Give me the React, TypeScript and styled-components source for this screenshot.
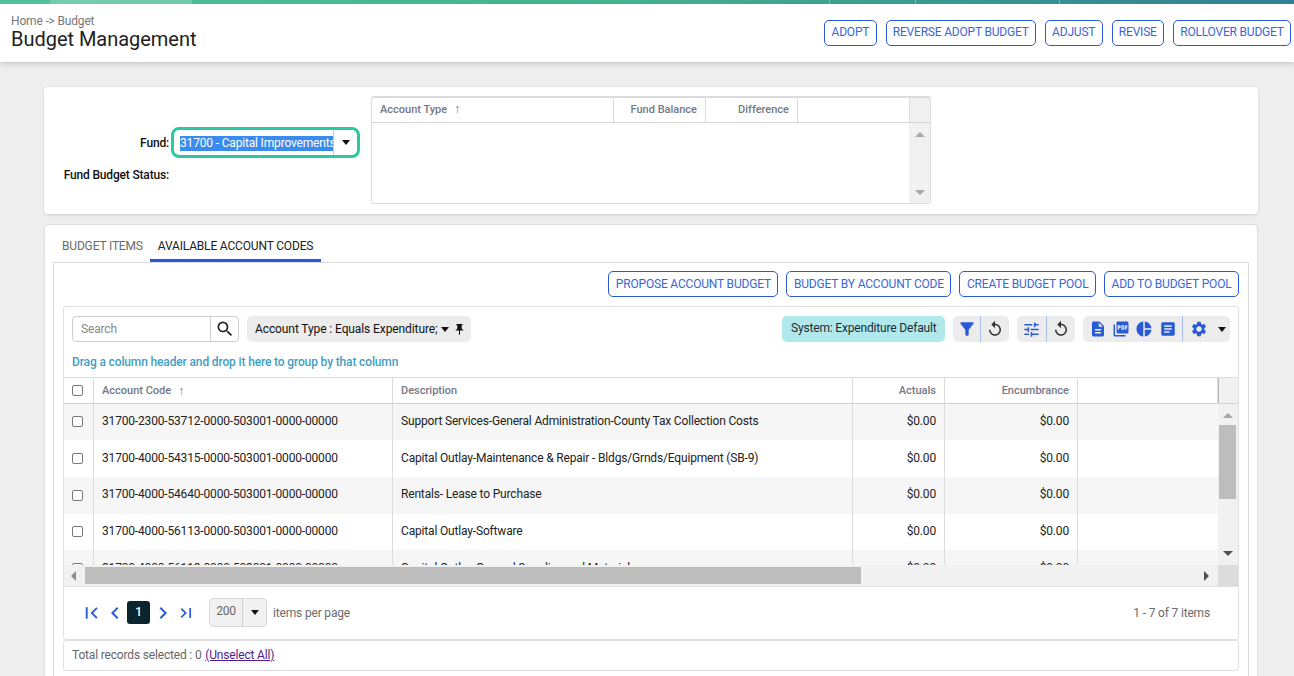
import React from "react";
import styled, { createGlobalStyle } from "styled-components";
import {
  MdArticle,
  MdChevronLeft,
  MdChevronRight,
  MdDescription,
  MdFilterAlt,
  MdFirstPage,
  MdLastPage,
  MdPictureAsPdf,
  MdPieChart,
  MdPushPin,
  MdReplay,
  MdSearch,
  MdSettings,
  MdTune,
} from "react-icons/md";

const blue = "#2a5bd7";

const GlobalStyle = createGlobalStyle`
  html, body {
    margin: 0;
    padding: 0;
    height: 100%;
    overflow: hidden;
    background: #eeeeee;
    font-family: Roboto, "Liberation Sans", sans-serif;
    font-size: 12px;
    letter-spacing: -0.17px;
    color: #212529;
  }
  * { box-sizing: border-box; }
`;

const Page = styled.div`
  position: relative;
  width: 1294px;
  height: 676px;
  overflow: hidden;
`;

const TopStripe = styled.div`
  position: relative;
  display: flex;
  height: 4px;
  background: linear-gradient(90deg, #50c29a 0%, #45b08f 50%, #3c9c90 70%, #317f93 100%);
`;

const StripeLight = styled.div`
  width: 142px;
  margin-left: 50px;
  background: rgba(255, 255, 255, 0.2);
`;

const StripeMark = styled.span<{ $x: number }>`
  position: absolute;
  left: ${(p) => p.$x}px;
  top: 0;
  width: 1px;
  height: 4px;
  background: rgba(255, 255, 255, 0.3);
`;

const Header = styled.header`
  display: flex;
  justify-content: space-between;
  height: 58px;
  background: #fff;
  box-shadow: 0 2px 5px rgba(0, 0, 0, 0.16);
  padding: 10px 3px 0 11px;
`;

const Crumb = styled.div`
  font-size: 12px;
  line-height: 14px;
  color: #777;
`;

const Title = styled.h1`
  margin: 0;
  font-size: 20px;
  line-height: 22px;
  font-weight: 400;
  letter-spacing: -0.03px;
  color: #212121;
`;

const HeaderActions = styled.div`
  display: flex;
  gap: 9px;
  padding-top: 6px;
`;

const OutlineButton = styled.button`
  height: 26px;
  padding: 0 6.5px;
  border: 1px solid ${blue};
  border-radius: 5px;
  background: #fff;
  color: #3a66d8;
  font: 400 12px Roboto, sans-serif;
  letter-spacing: -0.18px;
  white-space: nowrap;
`;

const HeaderButton = styled(OutlineButton)`
  padding: 0 6.25px 2px;
  letter-spacing: -0.2px;
`;

const FundCard = styled.section`
  position: absolute;
  left: 44px;
  top: 87px;
  width: 1214px;
  height: 127px;
  background: #fff;
  border-radius: 4px;
  box-shadow: 0 1px 3px rgba(0, 0, 0, 0.14);
`;

const FieldLabel = styled.label<{ $top: number }>`
  position: absolute;
  top: ${(p) => p.$top}px;
  right: 1089px;
  font-size: 12px;
  line-height: 14px;
  font-weight: 500;
  color: #111;
  white-space: nowrap;
`;

const FundSelect = styled.div`
  position: absolute;
  left: 127px;
  top: 40px;
  width: 189px;
  height: 31px;
  display: flex;
  align-items: center;
  border: 3px solid #2cc9a0;
  border-radius: 8px;
  background: #fff;
`;

const FundValue = styled.div`
  width: 160px;
  height: 100%;
  padding-left: 6px;
  border-right: 1px solid #ccc;
  overflow: hidden;
  white-space: nowrap;
  line-height: 27px;
  color: #fff;

  span {
    display: inline-block;
    width: 154px;
    height: 15px;
    line-height: 15px;
    background: #3a8bf0;
    overflow: hidden;
    vertical-align: middle;
  }
`;

const Caret = styled.span`
  display: inline-block;
  width: 0;
  height: 0;
  border-left: 4px solid transparent;
  border-right: 4px solid transparent;
  border-top: 5px solid #111;
`;

const CaretCell = styled.div`
  flex: 1;
  display: flex;
  align-items: center;
  justify-content: center;
`;

const SummaryGrid = styled.div`
  position: absolute;
  left: 327px;
  top: 9px;
  width: 560px;
  height: 108px;
  border: 1px solid #dcdcdc;
  border-top-width: 2px;
  border-radius: 3px;
  overflow: hidden;
`;

const SummaryHead = styled.div`
  display: grid;
  grid-template-columns: 242px 92px 92px 112px 1fr;
  height: 25px;
  border-bottom: 1px solid #d6d6d6;
`;

const HeadCell = styled.div<{ $right?: boolean; $raise?: boolean }>`
  display: flex;
  align-items: center;
  justify-content: ${(p) => (p.$right ? "flex-end" : "flex-start")};
  gap: 7px;
  padding: 0 8px ${(p) => (p.$raise ? 2 : 0)}px;
  font-size: 11px;
  font-weight: 500;
  letter-spacing: 0;
  color: #737985;
  border-right: 1px solid #dcdcdc;
  white-space: nowrap;
`;

const SortArrow = styled.span`
  font-size: 12px;
  color: #6b7280;
`;

const ScrollCorner = styled.div`
  background: #f1f1f1;
`;

const GridCorner = styled(ScrollCorner)`
  border-left: 1px solid #b5b5b5;
`;

const SummaryScroll = styled.div`
  position: absolute;
  right: 0;
  top: 25px;
  bottom: 0;
  width: 21px;
  background: #f1f1f1;
  display: flex;
  flex-direction: column;
  justify-content: space-between;
  align-items: center;
  padding: 9px 0 8px;
`;

const ArrowUp = styled.span`
  width: 0;
  height: 0;
  border-left: 5px solid transparent;
  border-right: 5px solid transparent;
  border-bottom: 5px solid #a8a8a8;
`;

const ArrowDown = styled.span<{ $dark?: boolean }>`
  width: 0;
  height: 0;
  border-left: 5px solid transparent;
  border-right: 5px solid transparent;
  border-top: 5px solid ${(p) => (p.$dark ? "#505050" : "#a8a8a8")};
`;

const TabsCard = styled.section`
  position: absolute;
  left: 44px;
  top: 224px;
  width: 1214px;
  height: 470px;
  background: #fff;
  border: 1px solid #dcdcdc;
  border-radius: 4px;
`;

const TabRow = styled.div`
  position: absolute;
  left: 9px;
  top: 7px;
  display: flex;
`;

const Tab = styled.div<{ $active?: boolean }>`
  height: 30px;
  padding: 0 8px;
  margin-left: ${(p) => (p.$active ? -1 : 0)}px;
  line-height: 28px;
  font-size: 12px;
  color: ${(p) => (p.$active ? "#212121" : "#6b6b6b")};
  border-bottom: 3px solid ${(p) => (p.$active ? blue : "transparent")};
  white-space: nowrap;
`;

const TabPanel = styled.div`
  position: absolute;
  left: 8px;
  top: 37px;
  width: 1196px;
  height: 430px;
  border: 1px solid #dcdcdc;
`;

const PanelActions = styled.div`
  position: absolute;
  right: 9px;
  top: 8px;
  display: flex;
  gap: 8px;
`;

const GridBox = styled.div`
  position: absolute;
  left: 9px;
  top: 43px;
  width: 1176px;
  height: 334px;
  border: 1px solid #dfdfdf;
  border-radius: 3px;
  overflow: hidden;
`;

const GridToolbar = styled.div`
  position: absolute;
  left: 8px;
  right: 8px;
  top: 9px;
  height: 26px;
  display: flex;
  align-items: flex-start;
`;

const SearchBox = styled.div`
  display: flex;
  width: 167px;
  height: 26px;
  border: 1px solid #cfcfcf;
  border-radius: 4px;
`;

const SearchInput = styled.div`
  flex: 1;
  padding-left: 8px;
  line-height: 24px;
  color: #888;
  border-right: 1px solid #cfcfcf;
`;

const SearchButton = styled.div`
  width: 27px;
  display: flex;
  align-items: center;
  justify-content: center;
  color: #222;
  font-size: 20px;
`;

const FilterChip = styled.div`
  margin-left: 8px;
  height: 26px;
  padding: 0 5px 0 8px;
  display: flex;
  align-items: center;
  gap: 4px;
  background: #ececec;
  border-radius: 5px;
  color: #111;
  letter-spacing: -0.1px;
  white-space: nowrap;
  svg { font-size: 13px; }
`;

const ViewChip = styled.div`
  margin-left: auto;
  height: 26px;
  padding: 0 8.5px;
  line-height: 24px;
  background: #b0e8ec;
  border-radius: 5px;
  color: #1c2b33;
  white-space: nowrap;
`;

const IconGroup = styled.div<{ $inset?: number }>`
  margin-left: 8px;
  height: 26px;
  padding-left: ${(p) => p.$inset ?? 0}px;
  display: flex;
  align-items: center;
  background: #ececec;
  border-radius: 5px;
`;

const IconSlot = styled.div<{ $w: number; $size?: number; $dark?: boolean; $divider?: boolean; $pad?: number }>`
  width: ${(p) => p.$w}px;
  height: 26px;
  padding-right: ${(p) => p.$pad ?? 0}px;
  display: flex;
  align-items: center;
  justify-content: center;
  font-size: ${(p) => p.$size ?? 18}px;
  color: ${(p) => (p.$dark ? "#333" : blue)};
  border-right: ${(p) => (p.$divider ? "1px solid #a9bdec" : "none")};
`;

const GroupHint = styled.div`
  position: absolute;
  left: 8px;
  top: 48px;
  font-size: 12px;
  line-height: 14px;
  font-weight: 500;
  letter-spacing: -0.14px;
  color: #3f9fc4;
  white-space: nowrap;
`;

const GridHead = styled.div`
  position: absolute;
  left: 0;
  right: 0;
  top: 70px;
  height: 27px;
  display: grid;
  grid-template-columns: 30px 299px 460px 92px 133px 140px 1fr;
  border-top: 1px solid #dcdcdc;
  border-bottom: 1px solid #d0d0d0;
`;

const CheckCell = styled.div`
  display: flex;
  align-items: center;
  justify-content: center;
  padding-right: 2px;
  border-right: 1px solid #dcdcdc;
`;

const CheckBox = styled.span`
  width: 11px;
  height: 11px;
  border: 1px solid #777;
  border-radius: 2px;
  background: #fff;
`;

const GridBody = styled.div`
  position: absolute;
  left: 0;
  right: 20px;
  top: 96.5px;
  height: 161.5px;
  overflow: hidden;
`;

const Row = styled.div<{ $alt: boolean }>`
  display: grid;
  grid-template-columns: 30px 299px 460px 92px 133px 1fr;
  height: 36.7px;
  background: ${(p) => (p.$alt ? "#f6f6f6" : "#fff")};
`;

const Cell = styled.div<{ $right?: boolean }>`
  display: flex;
  align-items: center;
  justify-content: ${(p) => (p.$right ? "flex-end" : "flex-start")};
  padding: 0 8px 2px;
  color: #222;
  border-right: 1px solid #dcdcdc;
  white-space: nowrap;
  overflow: hidden;
`;

const VScroll = styled.div`
  position: absolute;
  right: 0;
  top: 97px;
  width: 20px;
  height: 161px;
  background: #f1f1f1;
`;

const VThumb = styled.div`
  position: absolute;
  left: 1px;
  top: 21px;
  width: 17px;
  height: 74px;
  background: #bdbdbd;
`;

const VArrow = styled.div<{ $top: number }>`
  position: absolute;
  left: 5px;
  top: ${(p) => p.$top}px;
  display: flex;
`;

const HScroll = styled.div`
  position: absolute;
  left: 0;
  right: 0;
  top: 258px;
  height: 22px;
  background: #f1f1f1;
  border-bottom: 1px solid #e0e0e0;
`;

const HThumb = styled.div`
  position: absolute;
  left: 21px;
  top: 2px;
  width: 776px;
  height: 17px;
  background: #bdbdbd;
`;

const ArrowLeft = styled.span`
  position: absolute;
  left: 7px;
  top: 6px;
  width: 0;
  height: 0;
  border-top: 5px solid transparent;
  border-bottom: 5px solid transparent;
  border-right: 5px solid #8a8a8a;
`;

const ArrowRight = styled.span`
  position: absolute;
  right: 29px;
  top: 6px;
  width: 0;
  height: 0;
  border-top: 5px solid transparent;
  border-bottom: 5px solid transparent;
  border-left: 5px solid #505050;
`;

const HCorner = styled.div`
  position: absolute;
  right: 0;
  top: 0;
  width: 20px;
  height: 21px;
  background: #dcdcdc;
`;

const Pager = styled.div`
  position: absolute;
  left: 0;
  right: 0;
  top: 280px;
  height: 51px;
  display: flex;
  align-items: center;
  padding: 0 28px 0 16px;
  color: #6b6b6b;
`;

const PagerIcon = styled.span<{ $w: number }>`
  width: ${(p) => p.$w}px;
  display: flex;
  justify-content: center;
  color: ${blue};
  font-size: 24px;
`;

const PageNumber = styled.span`
  width: 23px;
  height: 23px;
  border-radius: 3px;
  background: #0a2530;
  color: #fff;
  font-weight: 500;
  text-align: center;
  line-height: 23px;
`;

const PageSize = styled.div`
  margin-left: 13px;
  width: 58px;
  height: 29px;
  display: flex;
  border: 1px solid #d8d8d8;
  border-radius: 4px;
  background: #f1f1f1;
`;

const PageSizeValue = styled.div`
  width: 33px;
  line-height: 25px;
  text-align: center;
  color: #666;
  border-right: 1px solid #d0d0d0;
`;

const PagerLabel = styled.span`
  margin-left: 6px;
`;

const PagerCount = styled.span`
  margin-left: auto;
`;

const SelectedBar = styled.div`
  position: absolute;
  left: 9px;
  top: 377px;
  width: 1176px;
  height: 31px;
  padding-left: 8px;
  line-height: 29px;
  border: 1px solid #dfdfdf;
  border-radius: 3px;
  color: #666;
`;

const UnselectLink = styled.a`
  margin-left: 1px;
  color: #551a8b;
  text-decoration: underline;
`;

const rows = [
  ["31700-2300-53712-0000-503001-0000-00000", "Support Services-General Administration-County Tax Collection Costs"],
  ["31700-4000-54315-0000-503001-0000-00000", "Capital Outlay-Maintenance & Repair - Bldgs/Grnds/Equipment (SB-9)"],
  ["31700-4000-54640-0000-503001-0000-00000", "Rentals- Lease to Purchase"],
  ["31700-4000-56113-0000-503001-0000-00000", "Capital Outlay-Software"],
  ["31700-4000-56118-0000-503001-0000-00000", "Capital Outlay-General Supplies and Materials"],
];

export default function App() {
  return (
    <Page>
      <GlobalStyle />
      <TopStripe>
        <StripeLight />
        <StripeMark $x={829} />
        <StripeMark $x={915} />
        <StripeMark $x={1059} />
      </TopStripe>
      <Header>
        <div>
          <Crumb>Home -&gt; Budget</Crumb>
          <Title>Budget Management</Title>
        </div>
        <HeaderActions>
          <HeaderButton>ADOPT</HeaderButton>
          <HeaderButton>REVERSE ADOPT BUDGET</HeaderButton>
          <HeaderButton>ADJUST</HeaderButton>
          <HeaderButton>REVISE</HeaderButton>
          <HeaderButton>ROLLOVER BUDGET</HeaderButton>
        </HeaderActions>
      </Header>

      <FundCard>
        <FieldLabel $top={49}>Fund:</FieldLabel>
        <FundSelect>
          <FundValue>
            <span>31700 - Capital Improvements</span>
          </FundValue>
          <CaretCell>
            <Caret />
          </CaretCell>
        </FundSelect>
        <FieldLabel $top={81}>Fund Budget Status:</FieldLabel>
        <SummaryGrid>
          <SummaryHead>
            <HeadCell $raise>
              Account Type <SortArrow>↑</SortArrow>
            </HeadCell>
            <HeadCell $right $raise>
              Fund Balance
            </HeadCell>
            <HeadCell $right $raise>
              Difference
            </HeadCell>
            <HeadCell />
            <ScrollCorner />
          </SummaryHead>
          <SummaryScroll>
            <ArrowUp />
            <ArrowDown />
          </SummaryScroll>
        </SummaryGrid>
      </FundCard>

      <TabsCard>
        <TabRow>
          <Tab>BUDGET ITEMS</Tab>
          <Tab $active>AVAILABLE ACCOUNT CODES</Tab>
        </TabRow>
        <TabPanel>
          <PanelActions>
            <OutlineButton>PROPOSE ACCOUNT BUDGET</OutlineButton>
            <OutlineButton>BUDGET BY ACCOUNT CODE</OutlineButton>
            <OutlineButton>CREATE BUDGET POOL</OutlineButton>
            <OutlineButton>ADD TO BUDGET POOL</OutlineButton>
          </PanelActions>

          <GridBox>
            <GridToolbar>
              <SearchBox>
                <SearchInput>Search</SearchInput>
                <SearchButton>
                  <MdSearch />
                </SearchButton>
              </SearchBox>
              <FilterChip>
                Account Type : Equals Expenditure;
                <Caret />
                <MdPushPin />
              </FilterChip>
              <ViewChip>System: Expenditure Default</ViewChip>
              <IconGroup>
                <IconSlot $w={28} $size={20} $divider>
                  <MdFilterAlt />
                </IconSlot>
                <IconSlot $w={28} $dark>
                  <MdReplay />
                </IconSlot>
              </IconGroup>
              <IconGroup>
                <IconSlot $w={30} $size={19} $divider>
                  <MdTune />
                </IconSlot>
                <IconSlot $w={28} $dark>
                  <MdReplay />
                </IconSlot>
              </IconGroup>
              <IconGroup $inset={3}>
                <IconSlot $w={24}>
                  <MdDescription />
                </IconSlot>
                <IconSlot $w={21}>
                  <MdPictureAsPdf />
                </IconSlot>
                <IconSlot $w={26}>
                  <MdPieChart />
                </IconSlot>
                <IconSlot $w={26} $pad={4} $divider>
                  <MdArticle />
                </IconSlot>
                <IconSlot $w={31}>
                  <MdSettings />
                </IconSlot>
                <IconSlot $w={16}>
                  <Caret />
                </IconSlot>
              </IconGroup>
            </GridToolbar>
            <GroupHint>Drag a column header and drop it here to group by that column</GroupHint>

            <GridHead>
              <CheckCell>
                <CheckBox />
              </CheckCell>
              <HeadCell>
                Account Code <SortArrow>↑</SortArrow>
              </HeadCell>
              <HeadCell>Description</HeadCell>
              <HeadCell $right>Actuals</HeadCell>
              <HeadCell $right>Encumbrance</HeadCell>
              <HeadCell />
              <GridCorner />
            </GridHead>

            <GridBody>
              {rows.map(([code, desc], i) => (
                <Row key={code} $alt={i % 2 === 0}>
                  <CheckCell>
                    <CheckBox />
                  </CheckCell>
                  <Cell>{code}</Cell>
                  <Cell>{desc}</Cell>
                  <Cell $right>$0.00</Cell>
                  <Cell $right>$0.00</Cell>
                  <div />
                </Row>
              ))}
            </GridBody>

            <VScroll>
              <VArrow $top={9}>
                <ArrowUp />
              </VArrow>
              <VThumb />
              <VArrow $top={147}>
                <ArrowDown $dark />
              </VArrow>
            </VScroll>

            <HScroll>
              <ArrowLeft />
              <HThumb />
              <ArrowRight />
              <HCorner />
            </HScroll>

            <Pager>
              <PagerIcon $w={23}>
                <MdFirstPage />
              </PagerIcon>
              <PagerIcon $w={24}>
                <MdChevronLeft />
              </PagerIcon>
              <PageNumber>1</PageNumber>
              <PagerIcon $w={26}>
                <MdChevronRight />
              </PagerIcon>
              <PagerIcon $w={20}>
                <MdLastPage />
              </PagerIcon>
              <PageSize>
                <PageSizeValue>200</PageSizeValue>
                <CaretCell>
                  <Caret />
                </CaretCell>
              </PageSize>
              <PagerLabel>items per page</PagerLabel>
              <PagerCount>1 - 7 of 7 items</PagerCount>
            </Pager>
          </GridBox>

          <SelectedBar>
            Total records selected : 0 <UnselectLink href="#">(Unselect All)</UnselectLink>
          </SelectedBar>
        </TabPanel>
      </TabsCard>
    </Page>
  );
}
